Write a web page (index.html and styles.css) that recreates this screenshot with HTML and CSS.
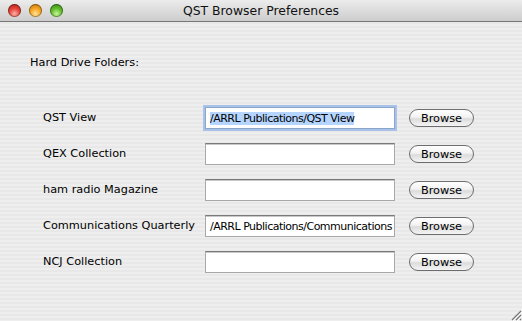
FILE: index.html
```html
<!DOCTYPE html>
<html lang="en">
<head>
    <meta charset="UTF-8">
    <title>QST Browser Preferences</title>
    <link rel="stylesheet" href="styles.css">
</head>
<body>
    <div class="window">
        <div class="titlebar">
            <div class="lights">
                <span class="light red"></span>
                <span class="light yellow"></span>
                <span class="light green"></span>
            </div>
            <div class="title">QST Browser Preferences</div>
        </div>

        <div class="content">
            <div class="heading">Hard Drive Folders:</div>

            <div class="folders">
                <label class="name">QST View</label>
                <div class="field focused"><span class="selected">/ARRL Publications/QST View</span></div>
                <button class="browse">Browse</button>

                <label class="name">QEX Collection</label>
                <div class="field"></div>
                <button class="browse">Browse</button>

                <label class="name">ham radio Magazine</label>
                <div class="field"></div>
                <button class="browse">Browse</button>

                <label class="name">Communications Quarterly</label>
                <div class="field">/ARRL Publications/Communications</div>
                <button class="browse">Browse</button>

                <label class="name">NCJ Collection</label>
                <div class="field"></div>
                <button class="browse">Browse</button>
            </div>
        </div>

        <svg class="grip" width="12" height="12" viewBox="0 0 12 12">
            <path d="M11 2 L2 11 M11 6 L6 11 M11 10 L10 11" stroke="#777" stroke-width="1.2" />
            <path d="M12 3 L3 12 M12 7 L7 12" stroke="#fff" stroke-width="1" />
        </svg>
    </div>
</body>
</html>
```

FILE: styles.css
```css
body {
    margin: 0;
    font-family: "DejaVu Sans", sans-serif;
    font-size: 11.3px;
    color: #000;
}
.window {
    position: relative;
    width: 522px;
    height: 321px;
    overflow: hidden;
    background: repeating-linear-gradient(to bottom, #eeeeee 0, #eeeeee 2px, #e8e8e8 2px, #e8e8e8 4px);
}
.titlebar {
    position: relative;
    height: 21px;
    border-bottom: 1px solid #777;
    background: linear-gradient(to bottom, #ececec 0%, #dcdcdc 50%, #cdcdcd 100%);
    display: flex;
    align-items: center;
    justify-content: center;
}
.lights {
    position: absolute;
    left: 8px;
    top: 4px;
    display: flex;
    gap: 8px;
}
.light {
    width: 13px;
    height: 13px;
    border-radius: 50%;
    box-shadow: inset 0 0 0 1px rgba(0, 0, 0, 0.35);
}
.red {
    background: radial-gradient(circle at 50% 75%, #ffb0a8 0%, #e3463b 45%, #a01810 100%);
}
.yellow {
    background: radial-gradient(circle at 50% 75%, #ffe39a 0%, #f5a623 45%, #b86a0a 100%);
}
.green {
    background: radial-gradient(circle at 50% 75%, #c8f59a 0%, #62bd2c 45%, #2f7a12 100%);
}
.title {
    font-size: 12.4px;
    color: #111;
}
.content {
    padding: 33px 0 0 30px;
}
.heading {
    height: 15px;
    line-height: 15px;
}
.folders {
    margin-top: 37px;
    margin-left: 13px;
    display: grid;
    grid-template-columns: 150px 190px 67px;
    column-gap: 12px;
    row-gap: 14px;
    align-items: center;
}
.name {
    line-height: 22px;
    white-space: nowrap;
}
.field {
    box-sizing: border-box;
    height: 22px;
    padding: 0 0 0 4px;
    font-size: 11px;
    line-height: 21px;
    letter-spacing: -0.5px;
    background: #fff;
    border: 1px solid #a8a8a8;
    border-top-color: #7a7a7a;
    box-shadow: inset 0 1px 0 #c8c8c8;
    white-space: nowrap;
    overflow: hidden;
}
.field.focused {
    border: 1px solid #8aa6cc;
    box-shadow: 0 0 0 2px #a9c3e8;
}
.selected {
    background: #b5d5ff;
}
.browse {
    margin-left: 2px;
    font-family: inherit;
    font-size: 11.3px;
    height: 18px;
    padding: 0;
    border: 1px solid #6d6d6d;
    border-radius: 9px;
    color: #000;
    background: linear-gradient(to bottom, #ffffff 0%, #f2f2f2 45%, #dcdcdc 55%, #f4f4f4 100%);
}
.grip {
    position: absolute;
    right: 0;
    bottom: 0;
}
```
